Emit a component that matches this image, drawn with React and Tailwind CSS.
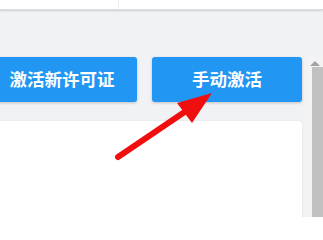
import React from "react";

const Scrollbar = () => (
  <div className="w-[16px] flex flex-col items-end bg-[#f3f3f3]">
    <div className="w-[16px] h-[10px] flex items-center justify-center pt-[2px]">
      <div className="w-0 h-0 border-l-[5px] border-r-[5px] border-b-[5px] border-l-transparent border-r-transparent border-b-[#a3a3a3]" />
    </div>
    <div className="w-[11px] flex-1 bg-[#c1c1c1]" />
  </div>
);

const Arrow = () => (
  <svg
    className="absolute left-0 top-0 pointer-events-none"
    width="323"
    height="217"
    viewBox="0 0 323 217"
  >
    <line
      x1="118"
      y1="157"
      x2="186"
      y2="111"
      stroke="#ef0f0f"
      strokeWidth="6"
      strokeLinecap="round"
    />
    <polygon points="212,93 177,103 192,123" fill="#ef0f0f" />
  </svg>
);

export default function App() {
  return (
    <div
      className="relative w-[323px] h-[217px] overflow-hidden flex flex-col bg-[#f0f2f5]"
      style={{ fontFamily: '"Noto Sans CJK SC", "Noto Sans", sans-serif' }}
    >
      <div className="h-[10px] bg-white flex shadow-[0_1px_2px_rgba(0,0,0,0.15)] border-b border-[#dcdcdc]">
        <div className="w-[119px] border-r border-[#ececec]" />
        <div className="flex-1" />
      </div>
      <div className="flex-1 flex pt-[47px] min-h-0">
        <div className="w-[307px] flex flex-col">
          <div className="flex gap-[15px] ml-[-13px] h-[45px]">
            <button className="w-[150px] h-[45px] rounded-[3px] bg-[#2196f3] text-white font-bold text-[17.5px] shadow-[0_1px_3px_rgba(0,0,0,0.2)]">
              激活新许可证
            </button>
            <button className="w-[150px] h-[45px] rounded-[3px] bg-[#2196f3] text-white font-bold text-[17.5px] shadow-[0_1px_3px_rgba(0,0,0,0.2)]">
              手动激活
            </button>
          </div>
          <div className="mt-[19px] mr-[5px] flex-1 bg-white rounded-tr-[3px] shadow-[0_0_2px_rgba(0,0,0,0.1)]" />
        </div>
        <Scrollbar />
      </div>
      <Arrow />
    </div>
  );
}
